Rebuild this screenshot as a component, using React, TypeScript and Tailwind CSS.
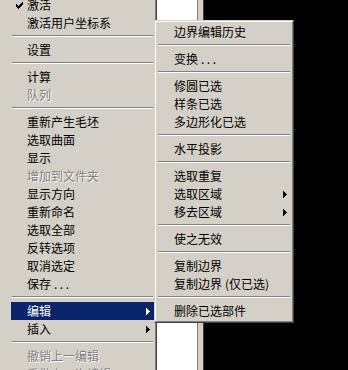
import React from "react";

type Item =
  | "sep"
  | {
      label: React.ReactNode;
      check?: boolean;
      disabled?: boolean;
      sub?: boolean;
      active?: boolean;
    };

const dots = <span className="ml-[3px] tracking-[2.5px]">...</span>;

const mainItems: Item[] = [
  { label: "激活", check: true },
  { label: "激活用户坐标系" },
  "sep",
  { label: "设置" },
  "sep",
  { label: "计算" },
  { label: "队列", disabled: true },
  "sep",
  { label: "重新产生毛坯" },
  { label: "选取曲面" },
  { label: "显示" },
  { label: "增加到文件夹", disabled: true },
  { label: "显示方向" },
  { label: "重新命名" },
  { label: "选取全部" },
  { label: "反转选项" },
  { label: "取消选定" },
  { label: <>保存{dots}</> },
  "sep",
  { label: "编辑", sub: true, active: true },
  { label: "插入", sub: true },
  "sep",
  { label: "撤销上一编辑", disabled: true },
  { label: "重做上一次编辑", disabled: true },
];

const editItems: Item[] = [
  { label: "边界编辑历史" },
  "sep",
  { label: <>变换{dots}</> },
  "sep",
  { label: "修圆已选" },
  { label: "样条已选" },
  { label: "多边形化已选" },
  "sep",
  { label: "水平投影" },
  "sep",
  { label: "选取重复" },
  { label: "选取区域", sub: true },
  { label: "移去区域", sub: true },
  "sep",
  { label: "使之无效" },
  "sep",
  { label: "复制边界" },
  {
    label: (
      <>
        复制边界
        <span className="inline-block w-[7px] text-right">(</span>
        仅已选
        <span className="inline-block w-[6px] text-left">)</span>
      </>
    ),
  },
  "sep",
  { label: "删除已选部件" },
];

function CheckMark() {
  return (
    <svg width="7" height="7" viewBox="0 0 7 7" shapeRendering="crispEdges">
      <path
        d="M6 0h1v1H6zM5 1h2v1H5zM0 2h1v1H0zM4 2h3v1H4zM0 3h2v1H0zM3 3h3v1H3zM0 4h5v1H0zM1 5h3v1H1zM2 6h1v1H2z"
        fill="#000"
      />
    </svg>
  );
}

function Arrow({ color }: { color: string }) {
  return (
    <svg width="4" height="7" viewBox="0 0 4 7" shapeRendering="crispEdges" className="ml-auto mr-[4px]">
      <path d="M0 0h1v7H0zM1 1h1v5H1zM2 2h1v3H2zM3 3h1v1H3z" fill={color} />
    </svg>
  );
}

function MenuList({ items, indent }: { items: Item[]; indent: string }) {
  return (
    <>
      {items.map((it, i) => {
        if (it === "sep") {
          return (
            <div key={i} className="h-[9px] px-[1px] pt-[3px]">
              <div className="h-[1px] bg-[#808080]" />
              <div className="h-[1px] bg-white" />
            </div>
          );
        }
        return (
          <div
            key={i}
            className={`flex h-[18px] shrink-0 items-center leading-[18px] ${
              it.active ? "bg-[#0a246a] text-white" : "text-black"
            }`}
          >
            <div className={`flex ${indent} shrink-0 items-center pl-[5px]`}>
              {it.check && <CheckMark />}
            </div>
            <span
              className={`whitespace-nowrap ${
                it.disabled ? "text-[#808080] [text-shadow:1px_1px_0_#fff]" : ""
              }`}
            >
              {it.label}
            </span>
            {it.sub && <Arrow color={it.active ? "#fff" : "#000"} />}
          </div>
        );
      })}
    </>
  );
}

export default function App() {
  return (
    <div className="relative flex h-[370px] w-[348px] overflow-hidden bg-black font-['Noto_Sans_CJK_SC',sans-serif] text-[12px]">
      {/* parent context menu */}
      <div className="flex w-[157px] shrink-0 border-r border-[#404040] bg-[#d4d0c8]">
        <div className="flex flex-1 flex-col border-r border-[#808080] pl-[11px] pr-[1px]">
          <div className="-mt-[4px] flex flex-col">
            <MenuList items={mainItems} indent="w-[16px]" />
          </div>
        </div>
      </div>

      {/* window behind */}
      <div className="w-[40px] shrink-0 bg-white" />
      <div className="w-[1px] shrink-0 bg-[#808080]" />
      <div className="w-[5px] shrink-0 bg-[#d4d0c8]" />
      <div className="w-[1px] shrink-0 bg-[#404040]" />
      <div className="flex-1 bg-black" />

      {/* edit submenu */}
      <div className="absolute left-[154px] top-[20px] w-[140px] border border-b-[#404040] border-l-[#d4d0c8] border-r-[#404040] border-t-[#d4d0c8]">
        <div className="border border-b-[#808080] border-l-white border-r-[#808080] border-t-white bg-[#d4d0c8] p-[1px]">
          <div className="flex flex-col">
            <MenuList items={editItems} indent="w-[17px]" />
          </div>
        </div>
      </div>
    </div>
  );
}
